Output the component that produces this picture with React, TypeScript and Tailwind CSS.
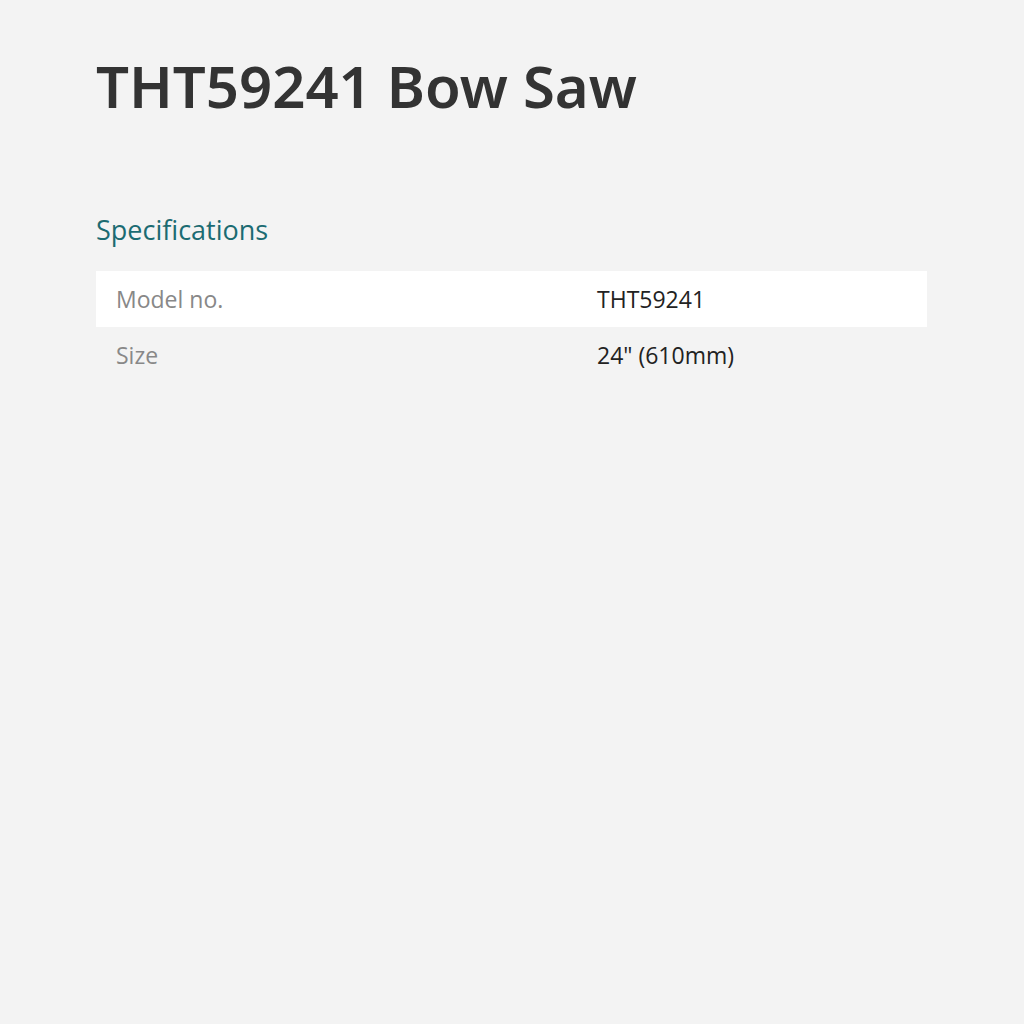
export default function App() {
  const specs = [
    { label: 'Model no.', value: 'THT59241' },
    { label: 'Size', value: '24" (610mm)' },
  ];

  return (
    <div className="min-h-screen w-full bg-[#f3f3f3] px-[96px] pt-[50px] font-['Open_Sans',sans-serif]">
      <h1 className="font-['Noto_Sans',sans-serif] text-[58px] font-semibold leading-[72px] text-[#333333]">
        THT59241 Bow Saw
      </h1>

      <h2 className="mt-[90px] text-[27px] leading-[36px] text-[#1b6b72]">Specifications</h2>

      <div className="mt-[23px] w-[831px]">
        {specs.map((row, i) => (
          <div
            key={row.label}
            className={`flex h-[56px] items-center text-[23px] ${i % 2 === 0 ? 'bg-white' : ''}`}
          >
            <div className="w-[501px] pl-[20px] text-[#888888]">{row.label}</div>
            <div className="text-[#222222]">{row.value}</div>
          </div>
        ))}
      </div>
    </div>
  );
}
